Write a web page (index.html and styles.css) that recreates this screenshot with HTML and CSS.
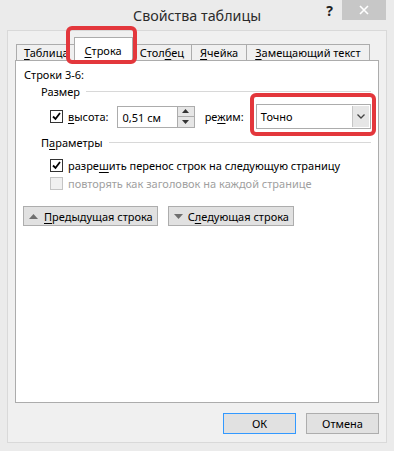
FILE: index.html
```html
<!DOCTYPE html>
<html lang="ru">
<head>
    <meta charset="UTF-8">
    <title>Свойства таблицы</title>
    <link rel="stylesheet" href="styles.css">
</head>
<body>
    <div class="window">
        <div class="titlebar">
            <div></div>
            <div class="title">Свойства таблицы</div>
            <div class="controls">
                <span class="help">?</span>
                <span class="close">
                    <svg width="10" height="10" viewBox="0 0 10 10"><path d="M1 1L9 9M9 1L1 9" stroke="#fff" stroke-width="1.6"/></svg>
                </span>
            </div>
        </div>

        <div class="client">
            <div class="tabs">
                <div class="tab"><u>Т</u>аблица</div>
                <div class="tab active"><u>С</u>трока<span class="mark mark-tab"></span></div>
                <div class="tab">Стол<u>б</u>ец</div>
                <div class="tab wide"><u>Я</u>чейка</div>
                <div class="tab wide"><u>З</u>амещающий текст</div>
            </div>

            <div class="panel">
                <div class="caption">Строки 3-6:</div>

                <div class="group-title"><span>Размер</span></div>
                <div class="size-row">
                    <span class="check checked">
                        <svg width="11" height="11" viewBox="0 0 11 11"><path d="M2 5.5L4.5 8L9 2" fill="none" stroke="#000" stroke-width="1.8"/></svg>
                    </span>
                    <span class="label"><u>в</u>ысота:</span>
                    <div class="spin">
                        <span class="spin-value">0,51 см</span>
                        <span class="spin-btns">
                            <span class="spin-btn"><svg width="7" height="4" viewBox="0 0 7 4"><path d="M0 4L3.5 0L7 4Z" fill="#333"/></svg></span>
                            <span class="spin-btn"><svg width="7" height="4" viewBox="0 0 7 4"><path d="M0 0L3.5 4L7 0Z" fill="#333"/></svg></span>
                        </span>
                    </div>
                    <span class="label mode-label">ре<u>ж</u>им:</span>
                    <div class="select">
                        <span class="select-value">Точно</span>
                        <span class="select-btn"><svg width="8" height="5" viewBox="0 0 8 5"><path d="M0.5 0.5L4 4L7.5 0.5" fill="none" stroke="#444" stroke-width="1.3"/></svg></span>
                        <span class="mark mark-select"></span>
                    </div>
                </div>

                <div class="group-title params"><span>П<u>а</u>раметры</span></div>
                <div class="check-row">
                    <span class="check checked">
                        <svg width="11" height="11" viewBox="0 0 11 11"><path d="M2 5.5L4.5 8L9 2" fill="none" stroke="#000" stroke-width="1.8"/></svg>
                    </span>
                    <span>разре<u>ш</u>ить перенос строк на следующую страницу</span>
                </div>
                <div class="check-row disabled">
                    <span class="check"></span>
                    <span>повторять как заголовок на каждой странице</span>
                </div>

                <div class="nav-row">
                    <button class="btn nav-btn">
                        <svg width="9" height="5" viewBox="0 0 9 5"><path d="M0 5L4.5 0L9 5Z" fill="#6f6f6f"/></svg>
                        <span><u>П</u>редыдущая строка</span>
                    </button>
                    <button class="btn nav-btn">
                        <svg width="9" height="5" viewBox="0 0 9 5"><path d="M0 0L4.5 5L9 0Z" fill="#6f6f6f"/></svg>
                        <span>С<u>л</u>едующая строка</span>
                    </button>
                </div>
            </div>

            <div class="footer">
                <button class="btn dlg-btn default">ОК</button>
                <button class="btn dlg-btn">Отмена</button>
            </div>
        </div>
    </div>
</body>
</html>
```

FILE: styles.css
```css
* {
    margin: 0;
    padding: 0;
    box-sizing: border-box;
}

body {
    font-family: 'Noto Sans', sans-serif;
    font-size: 11px;
    line-height: 15px;
    color: #000;
    background: #ebebeb;
}

u {
    text-decoration: underline;
    text-underline-offset: 2px;
}

.window {
    width: 394px;
    height: 451px;
    background: #ebebeb;
    display: flex;
    flex-direction: column;
}

/* заголовок окна */
.titlebar {
    height: 30px;
    display: grid;
    grid-template-columns: 1fr auto 1fr;
}

.title {
    font-size: 14.3px;
    line-height: 20px;
    padding-top: 6px;
    color: #2b2b2b;
}

.controls {
    display: flex;
    justify-content: flex-end;
    align-items: flex-start;
    padding-right: 8px;
}

.help {
    font-weight: bold;
    font-size: 14px;
    line-height: 16px;
    padding-top: 3px;
    margin-right: 9px;
    color: #222;
}

.close {
    width: 44px;
    height: 20px;
    background: #c7c7c7;
    display: flex;
    align-items: center;
    justify-content: center;
}

/* клиентская часть */
.client {
    flex: 1;
    margin: 0 7px 8px;
    border: 1px solid #d9d9d9;
    background: #f0f0f0;
    padding: 6px 7px 0;
    display: flex;
    flex-direction: column;
}

.tabs {
    display: flex;
    align-items: flex-end;
    height: 23px;
    padding-left: 1px;
    position: relative;
    z-index: 2;
}

.tab {
    height: 16px;
    line-height: 15px;
    padding: 0 7px;
    border: 1px solid #acacac;
    border-bottom: none;
    background: #f0f0f0;
    margin-right: -1px;
}

.tab.wide {
    padding: 0 8px;
}

.tab.active {
    position: relative;
    height: 24px;
    margin: 0 -1px -1px -2px;
    padding: 5px 10px 0;
    background: #fff;
    z-index: 3;
}

.panel {
    height: 343px;
    border: 1px solid #acacac;
    background: #fff;
    padding: 6px 7px 0 8px;
}

.caption {
    height: 15px;
}

.group-title {
    display: flex;
    align-items: center;
    margin: 2px 0 0 17px;
}

.group-title::after {
    content: '';
    flex: 1;
    border-top: 1px solid #d8d8d8;
    margin-left: 6px;
}

.group-title.params {
    margin-top: 6px;
}

.size-row {
    display: flex;
    align-items: center;
    height: 25px;
    margin: 5px 0 0 26px;
}

.check {
    width: 13px;
    height: 13px;
    border: 1px solid #333;
    background: #fff;
    display: inline-flex;
    align-items: center;
    justify-content: center;
    flex-shrink: 0;
}

.label {
    margin-left: 5px;
}

.spin {
    display: flex;
    width: 79px;
    height: 22px;
    margin-left: 9px;
    border: 1px solid #acacac;
    background: #fff;
}

.spin-value {
    flex: 1;
    padding: 3px 0 0 4px;
}

.spin-btns {
    width: 17px;
    display: flex;
    flex-direction: column;
    border-left: 1px solid #acacac;
}

.spin-btn {
    flex: 1;
    background: #e6e6e6;
    display: flex;
    align-items: center;
    justify-content: center;
}

.spin-btn + .spin-btn {
    border-top: 1px solid #acacac;
}

.mode-label {
    margin-left: 10px;
}

.select {
    position: relative;
    display: flex;
    width: 118px;
    height: 25px;
    margin-left: 12px;
    border: 1px solid #acacac;
    background: #fff;
}

.select-value {
    flex: 1;
    padding: 4px 0 0 4px;
}

.select-btn {
    width: 17px;
    margin: 1px;
    background: #e6e6e6;
    border-left: 1px solid #c6c6c6;
    display: flex;
    align-items: center;
    justify-content: center;
}

.check-row {
    display: flex;
    align-items: center;
    gap: 5px;
    height: 15px;
    margin: 3px 0 0 26px;
}

.group-title.params + .check-row {
    margin-top: 8px;
}

.check-row.disabled {
    color: #a0a0a0;
}

.check-row.disabled .check {
    border-color: #c4c4c4;
    background: #f0f0f0;
}

.nav-row {
    display: flex;
    gap: 10px;
    margin: 15px 0 0 -1px;
}

.btn {
    font-family: inherit;
    font-size: 11px;
    line-height: 15px;
    color: #000;
    background: #e1e1e1;
    border: 1px solid #adadad;
}

.nav-btn {
    height: 20px;
    display: flex;
    align-items: center;
    gap: 6px;
    padding: 0 4px 0 5px;
}

.nav-btn + .nav-btn {
    gap: 5px;
}

.footer {
    display: flex;
    justify-content: flex-end;
    gap: 10px;
    padding-top: 10px;
}

.dlg-btn {
    width: 73px;
    height: 21px;
}

.dlg-btn.default {
    border-color: #3399ff;
}

/* красные выделения поверх */
.mark {
    position: absolute;
    border: 4px solid #e3373c;
    border-radius: 6px;
    pointer-events: none;
}

.mark-tab {
    left: -9px;
    right: -5px;
    top: -12px;
    bottom: -3px;
}

.mark-select {
    left: -7px;
    right: -6px;
    top: -12px;
    bottom: -8px;
}
```
